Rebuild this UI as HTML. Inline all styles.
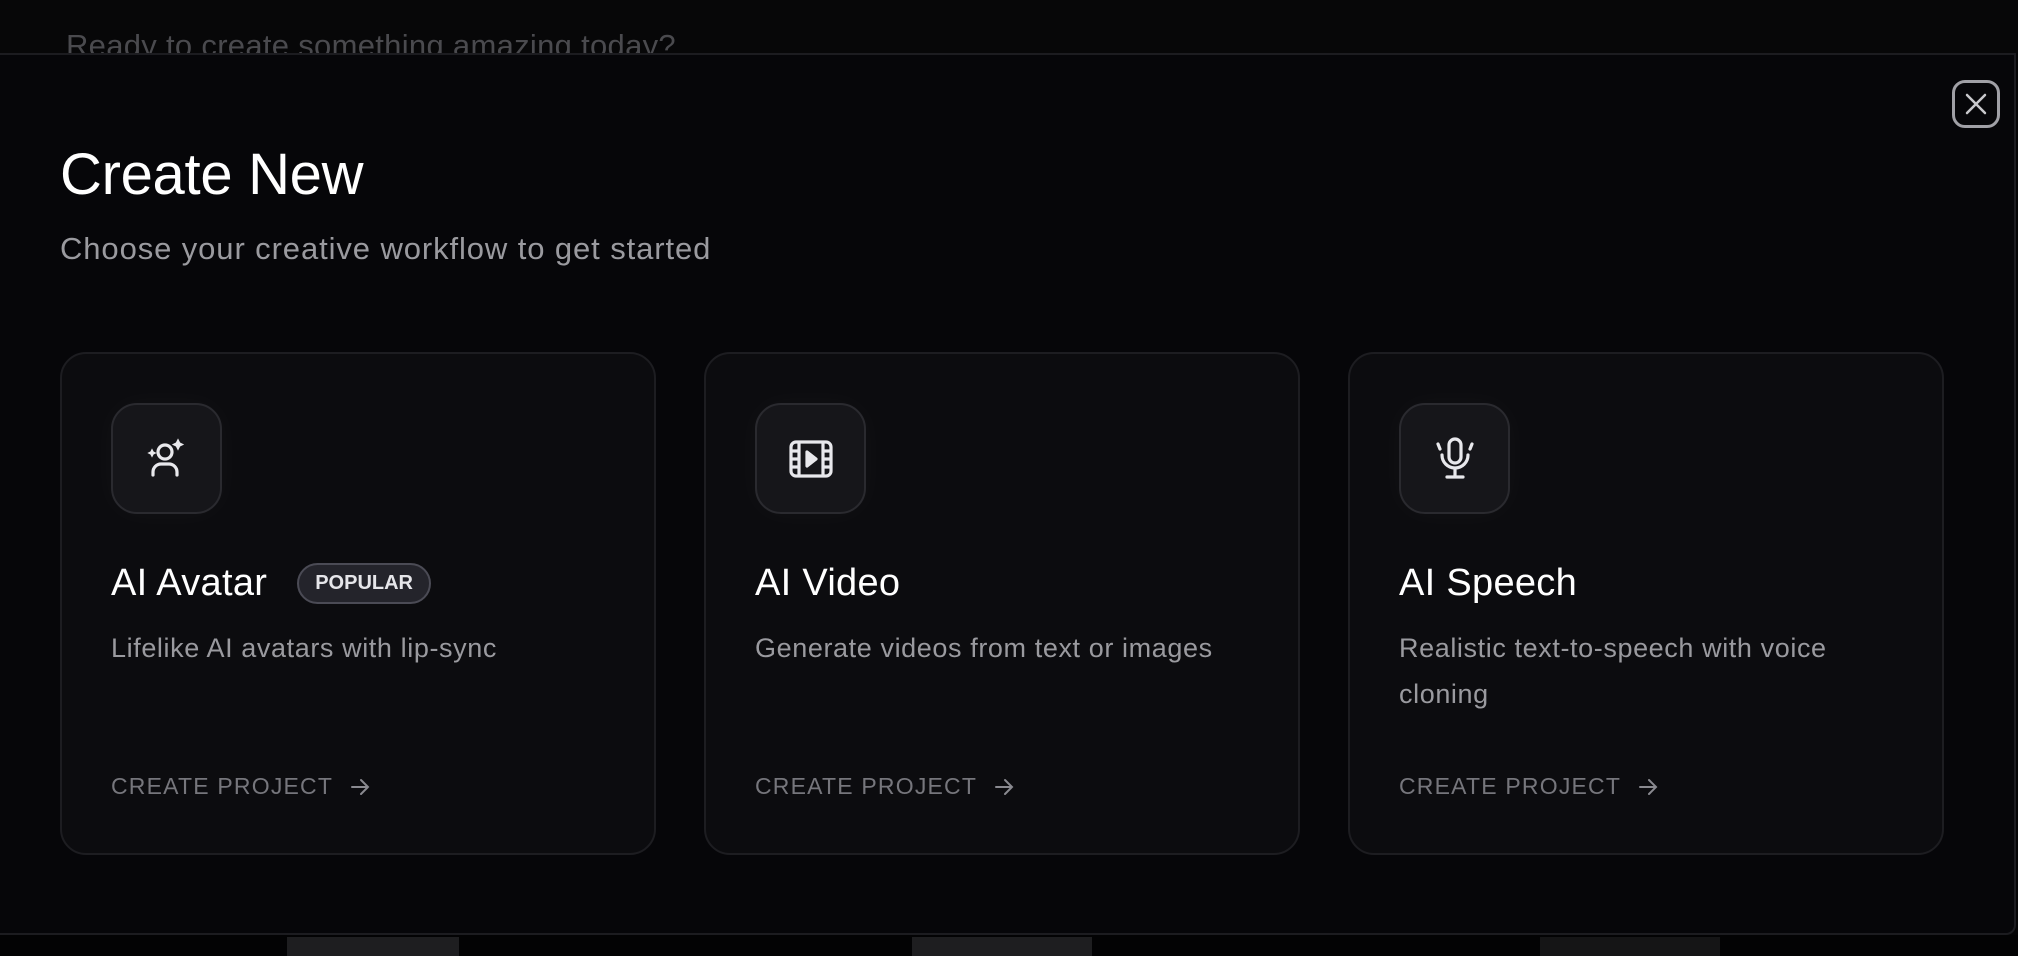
<!DOCTYPE html>
<html><head><meta charset="utf-8"><style>
*{margin:0;padding:0;box-sizing:border-box}
body{width:2018px;height:956px;background:#050506;overflow:hidden;position:relative;font-family:"Liberation Sans",sans-serif}
.top{position:absolute;left:0;top:0;width:2018px;height:60px;background:#070708}
.top span{position:absolute;left:66px;top:28px;font-size:31px;color:#4a4a4e;white-space:nowrap;letter-spacing:0.3px}
.modal{position:absolute;left:0;top:53px;width:2016px;height:882px;background:#060609;border:2px solid #1c1c20;border-left:none;border-radius:0 0 10px 0;overflow:hidden}
.bottom{position:absolute;left:0;top:935px;width:2018px;height:21px;background:#030304}
.b1{position:absolute;top:937px;height:19px;background:#1e1e20}
h1{position:absolute;left:60px;font-size:58px;font-weight:400;color:#fff;letter-spacing:-0.3px}
.sub{position:absolute;left:60px;font-size:31px;color:#9a9a9f;letter-spacing:0.9px}
.close{position:absolute;left:1952px;top:78px;width:48px;height:48px;border:3px solid #a0a0a6;border-radius:13px}
.card{position:absolute;top:350px;width:596px;height:503px;background:#0c0c0f;border:2px solid #1d1d21;border-radius:26px}
.ib{position:absolute;left:49px;top:49px;width:111px;height:111px;background:#16161a;border:2px solid #2a2a2f;border-radius:26px;display:flex;align-items:center;justify-content:center;box-shadow:0 0 30px rgba(255,255,255,0.03)}
.t{position:absolute;left:49px;top:208px;font-size:38px;color:#fff;white-space:nowrap;display:flex;align-items:center;letter-spacing:0.3px}
.pill{margin-left:30px;height:41px;padding:0 16px;border:2px solid #4b4b55;background:#24242b;border-radius:21px;font-size:20px;font-weight:bold;color:#e6e6ea;display:flex;align-items:center;letter-spacing:0}
.d{position:absolute;left:49px;top:271px;width:460px;font-size:27px;line-height:46px;color:#9a9a9f;letter-spacing:0.6px}
.c{position:absolute;left:49px;top:419px;font-size:23px;letter-spacing:1.2px;color:#76767c;display:flex;align-items:center;white-space:nowrap}
.c svg{margin-left:16px}
</style></head><body>
<div class="top"><span>Ready to create something amazing today?</span></div>
<div class="modal">
<h1 style="top:86px">Create New</h1>
<div class="sub" style="top:176px">Choose your creative workflow to get started</div>
<div class="close" style="top:25px"><svg width="42" height="42" viewBox="0 0 42 42"><path d="M12 12L30 30M30 12L12 30" stroke="#c8c8cc" stroke-width="2.5" stroke-linecap="round"/></svg></div>

<div class="card" style="left:60px;top:297px">
<div class="ib"><svg width="48" height="48" viewBox="0 0 48 48" fill="none" stroke="#e8e8ec" stroke-width="3.2" stroke-linecap="round"><circle cx="22" cy="17" r="7"/><path d="M10 40v-3a8 8 0 0 1 8-8h8a8 8 0 0 1 8 8v3"/><path d="M35 5l1.5 3 3 1.5-3 1.5-1.5 3-1.5-3-3-1.5 3-1.5z" fill="#e8e8ec" stroke-width="1.5"/><path d="M9 15l1 2 2 1-2 1-1 2-1-2-2-1 2-1z" fill="#e8e8ec" stroke-width="1.5"/></svg></div>
<div class="t">AI Avatar<span class="pill">POPULAR</span></div>
<div class="d">Lifelike AI avatars with lip-sync</div>
<div class="c">CREATE PROJECT<svg width="22" height="22" viewBox="0 0 22 22" fill="none" stroke="#8a8a90" stroke-width="2" stroke-linecap="round"><path d="M3 11h16M12 4l7 7-7 7"/></svg></div>
</div>

<div class="card" style="left:704px;top:297px">
<div class="ib"><svg width="50" height="50" viewBox="0 0 50 50" fill="none" stroke="#e8e8ec" stroke-width="3.2" stroke-linejoin="round"><rect x="5" y="8" width="40" height="34" rx="5"/><path d="M13 8v34M37 8v34M5 17h8M5 25h8M5 33h8M37 17h8M37 25h8M37 33h8"/><path d="M21 18l9 7-9 7z" fill="#e8e8ec"/></svg></div>
<div class="t">AI Video</div>
<div class="d">Generate videos from text or images</div>
<div class="c">CREATE PROJECT<svg width="22" height="22" viewBox="0 0 22 22" fill="none" stroke="#8a8a90" stroke-width="2" stroke-linecap="round"><path d="M3 11h16M12 4l7 7-7 7"/></svg></div>
</div>

<div class="card" style="left:1348px;top:297px">
<div class="ib"><svg width="50" height="50" viewBox="0 0 50 50" fill="none" stroke="#e8e8ec" stroke-width="3.2" stroke-linecap="round"><rect x="19" y="5" width="12" height="24" rx="6"/><path d="M12 21a13 13 0 0 0 26 0M25 34v9M17 43h16M8 10l2 5M42 10l-2 5"/></svg></div>
<div class="t">AI Speech</div>
<div class="d">Realistic text-to-speech with voice cloning</div>
<div class="c">CREATE PROJECT<svg width="22" height="22" viewBox="0 0 22 22" fill="none" stroke="#8a8a90" stroke-width="2" stroke-linecap="round"><path d="M3 11h16M12 4l7 7-7 7"/></svg></div>
</div>
</div>
<div class="bottom"></div>
<div class="b1" style="left:287px;width:172px"></div>
<div class="b1" style="left:912px;width:180px"></div>
<div class="b1" style="left:1540px;width:180px;background:#151516"></div>
</body></html>
